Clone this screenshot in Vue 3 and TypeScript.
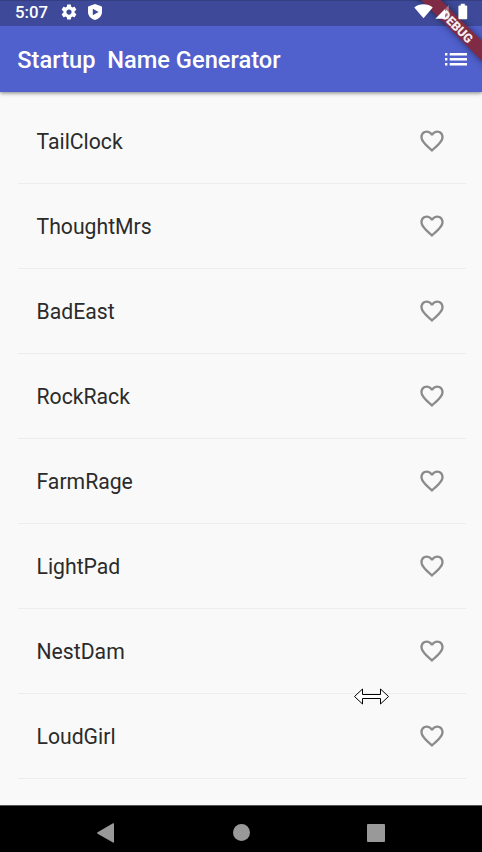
<script setup lang="ts">
import { ref } from 'vue'

interface Suggestion {
  name: string
  saved: boolean
}

const suggestions = ref<Suggestion[]>(
  ['TailClock', 'ThoughtMrs', 'BadEast', 'RockRack', 'FarmRage', 'LightPad', 'NestDam', 'LoudGirl'].map(
    (name) => ({ name, saved: false }),
  ),
)

function toggle(item: Suggestion): void {
  item.saved = !item.saved
}
</script>

<template>
  <div class="phone">
    <header class="top">
      <div class="status">
        <span class="time">5:07</span>
        <svg class="gear" viewBox="0 0 24 24">
          <path fill-rule="evenodd" d="M19.43 12.98c.04-.32.07-.64.07-.98s-.03-.66-.07-.98l2.11-1.65c.19-.15.24-.42.12-.64l-2-3.46c-.12-.22-.39-.3-.61-.22l-2.49 1c-.52-.4-1.08-.73-1.69-.98l-.38-2.65C14.46 2.18 14.25 2 14 2h-4c-.25 0-.46.18-.49.42l-.38 2.65c-.61.25-1.17.59-1.69.98l-2.49-1c-.23-.09-.49 0-.61.22l-2 3.46c-.13.22-.07.49.12.64l2.11 1.65c-.04.32-.07.65-.07.98s.03.66.07.98l-2.11 1.65c-.19.15-.24.42-.12.64l2 3.46c.12.22.39.3.61.22l2.49-1c.52.4 1.08.73 1.69.98l.38 2.65c.03.24.24.42.49.42h4c.25 0 .46-.18.49-.42l.38-2.65c.61-.25 1.17-.59 1.69-.98l2.49 1c.23.09.49 0 .61-.22l2-3.46c.12-.22.07-.49-.12-.64l-2.11-1.65zM12 15.5c-1.93 0-3.5-1.57-3.5-3.5s1.57-3.5 3.5-3.5 3.5 1.57 3.5 3.5-1.57 3.5-3.5 3.5z" />
        </svg>
        <svg class="shield" viewBox="0 0 14 16">
          <path fill-rule="evenodd" d="M7 0 13.3 2.2Q14 2.5 14 3.3V8C14 12 10.8 15 7 16 3.2 15 0 12 0 8V3.3Q0 2.5.7 2.2ZM4.8 4.8V11.2L10.6 8Z" />
        </svg>
        <span class="spacer"></span>
        <svg class="signals" viewBox="0 0 54 18">
          <path d="M.3 4.6C5 .2 14 .2 18.7 4.6L9.5 15.2Z" />
          <path d="M21.3 15.7 31 5.9V15.7Z" />
          <path class="weak" d="M31 5.9 34.8 2V15.7H31Z" />
          <path d="M46.8.8h4v1.6h1.5q.9 0 .9.9v12q0 .9-.9.9h-7q-.9 0-.9-.9v-12q0-.9.9-.9h1.5z" />
        </svg>
      </div>
      <div class="bar">
        <h1>Startup&nbsp; Name Generator</h1>
        <button class="menu" aria-label="Saved suggestions">
          <svg viewBox="0 0 22 13">
            <path d="M0 0h2.4v2.5H0zM4.7 0H22v2.5H4.7zM0 5h2.4v2.5H0zM4.7 5H22v2.5H4.7zM0 10h2.4v2.5H0zM4.7 10H22v2.5H4.7z" />
          </svg>
        </button>
      </div>
      <div class="corner"><div class="banner">DEBUG</div></div>
    </header>

    <ul class="list">
      <li v-for="item in suggestions" :key="item.name" @click="toggle(item)">
        <span>{{ item.name }}</span>
        <svg class="heart" :class="{ saved: item.saved }" viewBox="0 0 24 24">
          <path v-if="item.saved" d="M12 21.35l-1.45-1.32C5.4 15.36 2 12.28 2 8.5 2 5.42 4.42 3 7.5 3c1.74 0 3.41.81 4.5 2.09C13.09 3.81 14.76 3 16.5 3 19.58 3 22 5.42 22 8.5c0 3.78-3.4 6.86-8.55 11.54z" />
          <path v-else d="M16.5 3c-1.74 0-3.41.81-4.5 2.09C10.91 3.81 9.24 3 7.5 3 4.42 3 2 5.42 2 8.5c0 3.78 3.4 6.86 8.55 11.54L12 21.35l1.45-1.32C18.6 15.36 22 12.28 22 8.5 22 5.42 19.58 3 16.5 3zm-4.4 15.55l-.1.1-.1-.1C7.14 14.24 4 11.39 4 8.5 4 6.5 5.5 5 7.5 5c1.54 0 3.04.99 3.57 2.36h1.87C13.46 5.99 14.96 5 16.5 5c2 0 3.5 1.5 3.5 3.5 0 2.89-3.14 5.74-7.9 10.05z" />
        </svg>
      </li>
    </ul>

    <nav class="nav">
      <svg class="back" viewBox="0 0 17 20"><path d="M16 .3Q17 0 17 1V19Q17 20 16 19.6L.6 10.7Q-.3 10 .6 9.3Z" /></svg>
      <span class="home"></span>
      <span class="recent"></span>
    </nav>

    <svg class="cursor" viewBox="0 0 36 17">
      <path d="M.5 8.5 8.5 1V6.5H26.5V1L34.5 8.5 26.5 16V10.5H8.5V16Z" />
    </svg>
  </div>
</template>

<style>
body {
  margin: 0;
  overflow: hidden;
}
</style>

<style scoped>
.phone {
  position: relative;
  display: flex;
  flex-direction: column;
  width: 482px;
  height: 852px;
  overflow: hidden;
  background: #f9f9f9;
  font-family: Roboto, sans-serif;
}

.top {
  position: relative;
  flex: none;
  background: #5060cc;
  box-shadow: 0 1px 4px rgba(0, 0, 0, 0.5);
}

.status {
  display: flex;
  align-items: flex-start;
  box-sizing: border-box;
  height: 26px;
  padding: 0 14px 0 15px;
  border-top: 1px solid #343e80;
  background: #3e4a99;
  color: #fff;
}

.status svg {
  fill: #fff;
}

.time {
  width: 46px;
  padding-top: 2px;
  font-size: 16.8px;
  font-weight: 500;
  line-height: 19px;
}

.gear {
  width: 18px;
  height: 18px;
  margin: 2px 0 0 -1px;
}

.shield {
  width: 14px;
  height: 16px;
  margin: 3px 0 0 10px;
}

.spacer {
  flex: 1;
}

.signals {
  position: relative;
  z-index: 2;
  width: 54px;
  height: 18px;
  margin-top: 2px;
}

.signals .weak {
  opacity: 0.35;
}

.bar {
  display: flex;
  align-items: center;
  justify-content: space-between;
  height: 66px;
  padding: 0 15px 0 17.3px;
}

h1 {
  margin: 0;
  padding-top: 2px;
  color: #fff;
  font-size: 23.65px;
  font-weight: 500;
  line-height: 28px;
  white-space: nowrap;
}

.menu {
  padding: 0;
  border: 0;
  background: none;
}

.menu svg {
  display: block;
  width: 22px;
  height: 13px;
  fill: #fff;
}

.corner {
  position: absolute;
  z-index: 1;
  top: 0;
  right: 0;
  width: 90px;
  height: 92px;
  overflow: hidden;
}

.banner {
  position: absolute;
  top: 19px;
  left: 5px;
  width: 120px;
  height: 14px;
  background: #802b46;
  box-shadow: 0 0 7px rgba(0, 0, 0, 0.5);
  color: #f3eef0;
  font-size: 12.4px;
  font-weight: 900;
  line-height: 15px;
  text-align: center;
  text-indent: 1px;
  transform: rotate(45deg);
}

.list {
  flex: 1;
  margin: 0;
  padding: 6.9px 16.5px 0 17.5px;
  list-style: none;
}

li {
  display: flex;
  align-items: center;
  justify-content: space-between;
  box-sizing: border-box;
  height: 85.05px;
  padding: 0 19.2px 0 19px;
  border-bottom: 1px solid #ededed;
  color: #2b2b2b;
  font-size: 21.2px;
  line-height: 28px;
}

li span {
  padding-top: 1.4px;
}

.heart {
  width: 28px;
  height: 28px;
  fill: #8b8b8b;
}

.heart.saved {
  fill: #f44336;
}

.nav {
  display: grid;
  flex: none;
  grid-template-columns: repeat(3, 135px);
  align-items: center;
  justify-content: center;
  justify-items: center;
  box-sizing: border-box;
  height: 47.5px;
  padding-top: 8px;
  border-top: 1px solid #555;
  background: #000;
}

.back {
  width: 17px;
  height: 20px;
  margin-right: 1px;
  fill: #999;
}

.home {
  width: 17px;
  height: 17px;
  margin-left: 1px;
  border-radius: 50%;
  background: #999;
}

.recent {
  width: 18px;
  height: 18px;
  border-radius: 1px;
  background: #999;
}

.cursor {
  position: absolute;
  top: 688px;
  left: 354px;
  width: 36px;
  height: 17px;
  fill: #fff;
  stroke: #000;
  stroke-width: 1;
}
</style>
